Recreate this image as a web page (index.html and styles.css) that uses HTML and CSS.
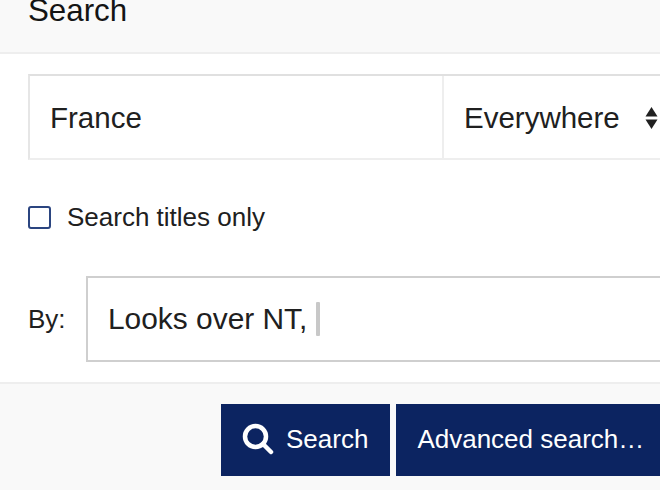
FILE: index.html
```html
<!DOCTYPE html>
<html lang="en">
<head>
    <meta charset="UTF-8">
    <meta name="viewport" content="width=device-width, initial-scale=1.0">
    <title>Search</title>
    <link rel="stylesheet" href="styles.css">
</head>
<body>
    <div class="overlay">
        <div class="overlay-title"><h2>Search</h2></div>

        <form class="overlay-body">
            <!-- Keywords and scope -->
            <div class="input-group">
                <div class="input-keywords">France</div>
                <div class="input-scope">
                    <span>Everywhere</span>
                    <svg class="select-arrows" width="13" height="22" viewBox="0 0 13 22">
                        <path d="M6.5 0L12.5 9.5H0.5Z"/>
                        <path d="M0.5 12.5H12.5L6.5 22Z"/>
                    </svg>
                </div>
            </div>

            <label class="check-row">
                <span class="checkbox"></span>
                <span>Search titles only</span>
            </label>

            <div class="by-row">
                <span class="by-label">By:</span>
                <div class="by-input">
                    <span>Looks over NT,</span>
                    <span class="caret"></span>
                </div>
            </div>
        </form>

        <div class="overlay-footer">
            <button type="button" class="button">
                <svg class="search-icon" width="32" height="32" viewBox="0 0 32 32">
                    <circle cx="13.5" cy="13.5" r="10.5"/>
                    <line x1="21" y1="21" x2="29" y2="29"/>
                </svg>
                <span>Search</span>
            </button>
            <button type="button" class="button">Advanced search…</button>
        </div>
    </div>
</body>
</html>
```

FILE: styles.css
```css
html, body {
    height: 100%;
}
body {
    margin: 0;
    overflow: hidden;
    background: #fff;
    color: #202020;
    font-family: "Liberation Sans", Arial, sans-serif;
}
.overlay {
    width: 660px;
    height: 490px;
    display: flex;
    flex-direction: column;
}
.overlay-title {
    box-sizing: border-box;
    height: 54px;
    padding: 0 0 23px 28px;
    display: flex;
    align-items: flex-end;
    background: #f9f9f9;
    border-bottom: 2px solid #eee;
}
.overlay-title h2 {
    margin: 0;
    font-size: 31.3px;
    line-height: 36px;
    font-weight: normal;
    color: #141414;
}
.overlay-body {
    box-sizing: border-box;
    height: 328px;
    padding: 20px 0 0 28px;
}
.input-group {
    box-sizing: border-box;
    display: flex;
    width: 700px;
    height: 86px;
    border: 2px solid #e0e0e0;
    border-bottom-color: #eee;
    border-left-color: #e6e6e6;
    font-size: 29.5px;
}
.input-keywords {
    box-sizing: border-box;
    width: 412px;
    padding: 2px 0 0 20px;
    display: flex;
    align-items: center;
}
.input-scope {
    flex: 1;
    padding: 2px 0 0 20px;
    display: flex;
    align-items: center;
    gap: 25px;
    border-left: 2px solid #eee;
}
.select-arrows {
    fill: #202020;
}
.check-row {
    display: flex;
    align-items: center;
    gap: 16px;
    margin-top: 43px;
    height: 28px;
    font-size: 26px;
}
.checkbox {
    box-sizing: border-box;
    width: 23px;
    height: 23px;
    border: 2px solid #2b4580;
    border-radius: 3px;
}
.by-row {
    display: flex;
    align-items: center;
    margin-top: 45px;
    font-size: 26px;
}
.by-label {
    width: 58px;
    flex-shrink: 0;
}
.by-input {
    box-sizing: border-box;
    width: 700px;
    height: 86px;
    padding-left: 20px;
    display: flex;
    align-items: center;
    gap: 9px;
    flex-shrink: 0;
    border: 2px solid #cfcfcf;
    font-size: 29.9px;
}
.caret {
    width: 4px;
    height: 34px;
    border-radius: 1px;
    background: #c8c8c8;
}
.overlay-footer {
    flex: 1;
    padding: 20px 0 0 221px;
    display: flex;
    align-items: flex-start;
    gap: 6px;
    background: #f9f9f9;
    border-top: 2px solid #eee;
}
.button {
    height: 72px;
    padding: 0 22px 2px 21px;
    display: flex;
    align-items: center;
    gap: 12px;
    border: none;
    background: #0c2461;
    color: #fff;
    font-family: inherit;
    font-size: 26px;
    white-space: nowrap;
    flex-shrink: 0;
}
.search-icon {
    fill: none;
    stroke: #fff;
    stroke-width: 4.5;
    stroke-linecap: round;
}
```
